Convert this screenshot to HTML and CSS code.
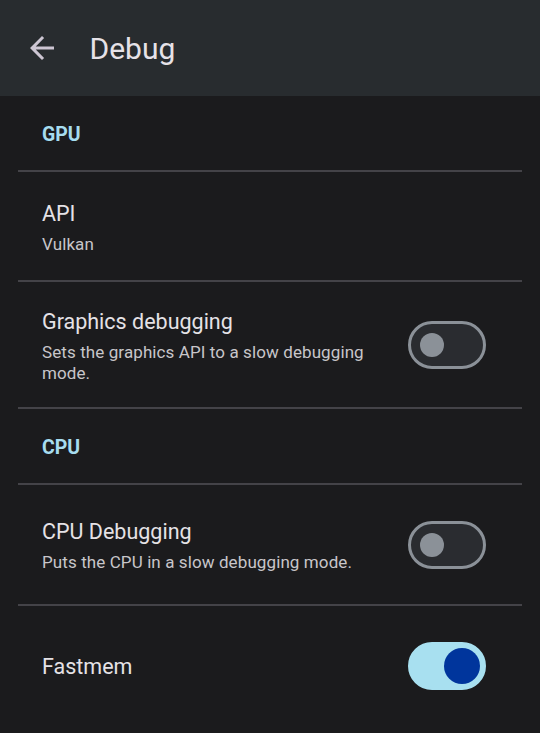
FILE: index.html
```html
<!DOCTYPE html>
<html lang="en">
<head>
<meta charset="utf-8">
<title>Debug</title>
<link rel="stylesheet" href="styles.css">
</head>
<body>
<header class="appbar">
  <button class="back" aria-label="Back">
    <svg viewBox="0 0 24 24" width="36" height="36"><path d="M20 11H7.83l5.59-5.59L12 4l-8 8 8 8 1.41-1.41L7.83 13H20v-2z" fill="currentColor"/></svg>
  </button>
  <h1 class="title">Debug</h1>
</header>
<main class="list">
  <div class="row category"><span class="cat-label">GPU</span></div>
  <div class="row item item-api">
    <div class="text">
      <div class="item-title">API</div>
      <div class="item-summary">Vulkan</div>
    </div>
  </div>
  <div class="row item item-gfx">
    <div class="text">
      <div class="item-title">Graphics debugging</div>
      <div class="item-summary">Sets the graphics API to a slow debugging mode.</div>
    </div>
    <span class="switch"><span class="thumb"></span></span>
  </div>
  <div class="row category"><span class="cat-label">CPU</span></div>
  <div class="row item item-cpu">
    <div class="text">
      <div class="item-title">CPU Debugging</div>
      <div class="item-summary">Puts the CPU in a slow debugging mode.</div>
    </div>
    <span class="switch"><span class="thumb"></span></span>
  </div>
  <div class="row item item-fast">
    <div class="text">
      <div class="item-title">Fastmem</div>
    </div>
    <span class="switch on"><span class="thumb"></span></span>
  </div>
</main>
</body>
</html>
```
FILE: styles.css
```css
* { box-sizing: border-box; }
html, body {
  margin: 0;
  padding: 0;
  background: #1b1b1d;
  font-family: Roboto, "Noto Sans", sans-serif;
  color: #e4e2e6;
}
.appbar {
  height: 96px;
  background: #282c2f;
  display: flex;
  align-items: center;
  padding-left: 23.5px;
}
.back {
  width: 36px;
  height: 36px;
  padding: 0;
  border: 0;
  background: none;
  color: #cdc6d3;
  display: flex;
}
.title {
  margin: 0 0 0 30px;
  font-size: 30px;
  font-weight: 400;
  color: #e6e2e8;
}
.list {
  margin: 0 18px;
}
.row {
  border-bottom: 2px solid #444348;
  display: flex;
  align-items: center;
  padding: 0 36px 0 24px;
}
.row:last-child { border-bottom: 0; }
.category {
  min-height: 76px;
  padding-top: 2px;
}
.cat-label {
  font-size: 19.5px;
  font-weight: 700;
  color: #a6dcef;
}
.item-api { min-height: 110px; }
.item-gfx { min-height: 127px; }
.item-cpu { min-height: 121px; }
.item-fast { min-height: 120px; }
.text {
  flex: 1;
  padding-bottom: 2px;
  padding-right: 20px;
}
.item-fast .text {
  padding-bottom: 0;
  padding-top: 2px;
}
.item-title {
  font-size: 21.5px;
  line-height: 36px;
  color: #e5e2e6;
}
.item-summary {
  margin-top: 2px;
  font-size: 17px;
  line-height: 20.5px;
  letter-spacing: 0.1px;
  color: #c8c6ca;
}
.switch {
  flex: none;
  width: 78px;
  height: 48px;
  border-radius: 24px;
  border: 3px solid #8b9198;
  background: #2a2c30;
  display: flex;
  align-items: center;
  padding-left: 9px;
}
.thumb {
  width: 24px;
  height: 24px;
  border-radius: 50%;
  background: #8b9198;
}
.switch.on {
  border-color: #a8e0f0;
  background: #a8e0f0;
  justify-content: flex-end;
  padding: 0 3px 0 0;
}
.switch.on .thumb {
  width: 36px;
  height: 36px;
  background: #00359c;
}
```
